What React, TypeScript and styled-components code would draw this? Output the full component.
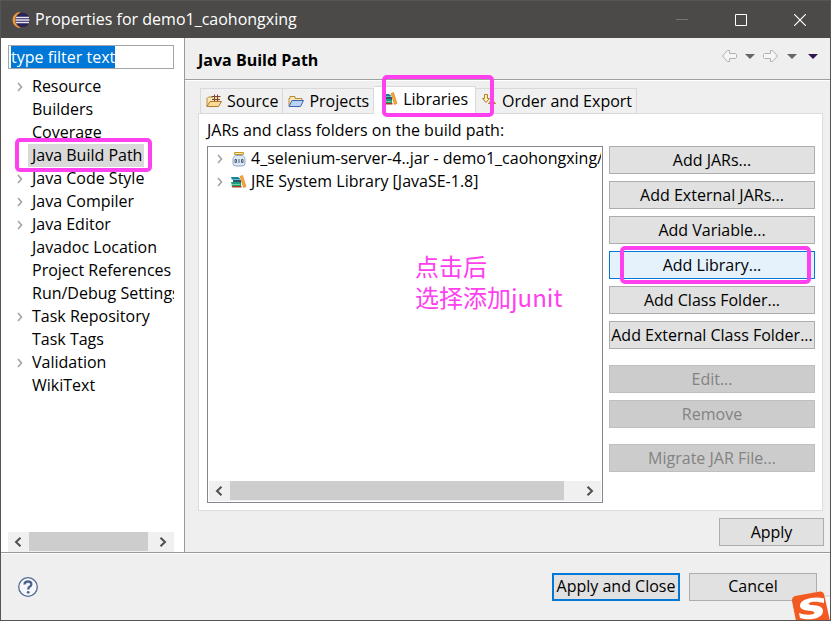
import React, { useEffect, useRef } from "react";
import styled, { createGlobalStyle, css } from "styled-components";

const GlobalStyle = createGlobalStyle`
  *, *::before, *::after { box-sizing: border-box; }
  body { margin: 0; }
  body, button, input {
    font-family: "Open Sans", "Noto Sans", "Noto Sans CJK SC", sans-serif;
    font-size: 16px;
    line-height: 23px;
    color: #000;
  }
  svg { display: block; flex: none; }
`;

const Dialog = styled.div`
  position: relative;
  display: flex;
  flex-direction: column;
  min-height: 100vh;
  border: 1px solid #555;
  background: #efefef;
  overflow: hidden;
`;

const TitleBar = styled.header`
  display: flex;
  align-items: center;
  height: 37px;
  padding: 0 1px 0 11px;
  background: #4b4a48;
  color: #fff;
`;

const WindowTitle = styled.h1`
  flex: 1;
  margin: 0 0 0 4px;
  font-size: 16px;
  font-weight: 400;
`;

const CaptionButton = styled.button`
  display: flex;
  align-items: center;
  justify-content: center;
  width: 59px;
  height: 37px;
  padding: 0;
  border: 0;
  background: none;
`;

const Body = styled.div`
  flex: 1;
  display: flex;
  min-height: 0;
`;

const Sidebar = styled.nav`
  display: flex;
  flex-direction: column;
  flex: none;
  width: 184px;
  padding: 7px 10px 0 7px;
  background: #fff;
  border-right: 1px solid #999;
`;

const FilterInput = styled.input`
  width: 100%;
  height: 24px;
  padding: 0 2px;
  border: 1px solid #a3a5ab;
  border-radius: 0;
  outline: 0;
  background: #fff;
  line-height: 20px;
  &::selection { background: #0078d7; color: #fff; }
`;

const Tree = styled.ul`
  flex: 1;
  margin: 0;
  padding: 6px 0 0;
  list-style: none;
  overflow: hidden;
`;

const TreeItem = styled.li`
  display: flex;
  align-items: center;
  height: 23px;
  white-space: nowrap;
`;

const TreeToggle = styled.span<{ $wide?: boolean }>`
  display: flex;
  flex: none;
  align-items: center;
  justify-content: center;
  width: ${(p) => (p.$wide ? 22 : 20)}px;
  padding-left: ${(p) => (p.$wide ? 0 : 4)}px;
`;

const EntryIcon = styled.span`
  display: flex;
  flex: none;
  justify-content: center;
  width: 16px;
`;

const TreeLabel = styled.span<{ $selected?: boolean }>`
  position: relative;
  padding: 0 2px 0 4px;
  background: ${(p) => (p.$selected ? "#d9d9d9" : "transparent")};
`;

const Marker = styled.span<{ $inset: string }>`
  position: absolute;
  z-index: 2;
  inset: ${(p) => p.$inset};
  border: 4px solid #ff40ee;
  border-radius: 5px;
  pointer-events: none;
`;

const ScrollTrack = styled.div`
  display: flex;
  flex: none;
  height: 20px;
  background: #f0f0f0;
`;

const ScrollArrow = styled.button`
  display: flex;
  flex: none;
  align-items: center;
  justify-content: center;
  width: 21px;
  height: 20px;
  padding: 0 2px 0 0;
  border: 0;
  background: none;
`;

const ScrollThumb = styled.div<{ $rest: number }>`
  flex: 1;
  height: 19px;
  margin-right: ${(p) => p.$rest}px;
  background: #cdcdcd;
`;

const Page = styled.main`
  flex: 1;
  display: flex;
  flex-direction: column;
  min-width: 0;
`;

const PageHeader = styled.div`
  display: flex;
  align-items: center;
  justify-content: space-between;
  height: 42px;
  padding: 0 12px 5px 13px;
  border-bottom: 1px solid #a0a0a0;
  box-shadow: 0 1px 0 #fff;
`;

const PageTitle = styled.h2`
  margin: 0;
  padding-top: 9px;
  font-size: 16px;
  font-weight: 700;
`;

const HistoryBar = styled.div`
  display: flex;
  align-items: center;
  gap: 8px;
`;

const IconButton = styled.button`
  padding: 0;
  border: 0;
  background: none;
`;

const MenuButton = styled(IconButton)`
  margin-left: 3px;
`;

const TabList = styled.div`
  display: flex;
  align-items: flex-end;
  margin: 6px 0 -1px;
  padding-left: 15px;
`;

const Tab = styled.button<{ $active?: boolean }>`
  position: relative;
  display: flex;
  align-items: center;
  gap: 5px;
  height: 26px;
  padding: 0 4px 0 5px;
  border: 1px solid #d9d9d9;
  border-left-width: 0;
  background: #f0f0f0;
  white-space: nowrap;
  &:first-child { border-left-width: 1px; }
  ${(p) =>
    p.$active &&
    css`
      height: 28px;
      padding: 0 7px 2px 8px;
      background: #fff;
      border-bottom-color: #fff;
    `}
`;

const TabPanel = styled.section`
  flex: 1;
  display: flex;
  flex-direction: column;
  margin: 0 7px 0 13px;
  padding: 5px 7px 7px 8px;
  border: 1px solid #dcdcdc;
  background: #fff;
`;

const PanelCaption = styled.p`
  margin: 0 0 4px;
`;

const Columns = styled.div`
  flex: 1;
  display: flex;
  gap: 6px;
`;

const EntryBox = styled.div`
  position: relative;
  flex: 1;
  display: flex;
  flex-direction: column;
  min-width: 0;
  padding: 0 1px 1px;
  border: 1px solid #828790;
`;

const EntryList = styled(Tree)`
  padding-top: 0;
`;

const Note = styled.p`
  position: absolute;
  left: 207px;
  top: 103px;
  margin: 0;
  color: #ff40ee;
  font-family: "Noto Sans CJK SC", sans-serif;
  font-size: 24px;
  font-weight: 400;
  line-height: 31px;
  white-space: nowrap;
`;

const Actions = styled.div`
  display: flex;
  flex: none;
  flex-direction: column;
  gap: 7px;
  width: 206px;
`;

const PushButton = styled.button<{ $width?: number; $look?: "hover" | "default"; $spaced?: boolean }>`
  position: relative;
  width: ${(p) => (p.$width ? `${p.$width}px` : "100%")};
  height: 28px;
  margin-top: ${(p) => (p.$spaced ? 9 : 0)}px;
  padding: 0;
  border: 1px solid #adadad;
  background: #e1e1e1;
  white-space: nowrap;
  ${(p) => p.$look === "hover" && css`border-color: #0078d7; background: #e5f1fb;`}
  ${(p) => p.$look === "default" && css`border: 2px solid #0078d7;`}
  &:disabled { border-color: #bfbfbf; background: #ccc; color: #838383; }
`;

const ApplyRow = styled.div`
  display: flex;
  justify-content: flex-end;
  padding: 7px 6px 6px;
`;

const Footer = styled.footer`
  display: flex;
  align-items: center;
  gap: 9px;
  height: 68px;
  padding: 0 13px 0 17px;
  border-top: 1px solid #999;
  box-shadow: inset 0 1px 0 #fff;
`;

const FooterSpacer = styled.div`
  flex: 1;
`;

const InputMethodBadge = styled.div`
  position: absolute;
  right: -1px;
  bottom: -1px;
  z-index: 3;
`;

const EclipseIcon = () => (
  <svg width="19" height="18" viewBox="0 0 19 18">
    <path d="M8.500 1A8 8 0 0 0 8.500 17A11 11 0 0 1 8.500 1Z" fill="#f09a38" />
    <circle cx="10.500" cy="9" r="7.300" fill="#2c2255" />
    <path d="M4 6.500h13M3.500 9h14M4 11.500h13" stroke="#e6e4f2" strokeWidth="1.400" />
  </svg>
);

const Expander = () => (
  <svg width="6" height="10" viewBox="0 0 6 10">
    <path d="M1 1l3.500 4L1 9" fill="none" stroke="#a6a6a6" strokeWidth="1.700" />
  </svg>
);

const SourceIcon = () => (
  <svg width="16" height="14" viewBox="0 0 16 14">
    <path d="M1 12.500V4.500L2.500 3H6l1 1.500h5v3" fill="#fbe6ae" stroke="#b78a45" />
    <path d="M6.500 2.500h7v5h-7z" fill="#f7d9b0" />
    <path d="M5.500 2.500h9M6 5.500h8M8.500 0.500v7M11.500 0.500v7" stroke="#7b4a35" />
    <path d="M1 12.500L4 7.500h11.500l-3 5z" fill="#fbdc94" stroke="#b07a30" />
  </svg>
);

const ProjectsIcon = () => (
  <svg width="16" height="14" viewBox="0 0 16 14">
    <path d="M1 12V4.500h1v-2h5v2h7v3" fill="#fbe8b3" stroke="#b68a3d" />
    <path d="M1 12.500L4 6.500h11.500l-3 6z" fill="#b8d5f5" stroke="#3c63b4" />
  </svg>
);

const LibraryIcon = () => (
  <svg width="16" height="14" viewBox="0 0 16 14">
    <path d="M0 2h7l2 1.500V5H1z" fill="#1b7fa0" />
    <path d="M1 4.500h8" stroke="#5fc3c4" />
    <path d="M2 5h8v3H2z" fill="#2b5570" />
    <path d="M0 7h8l2 1v3H1z" fill="#1f9e7a" />
    <path d="M1 9.500h8" stroke="#6fd09a" />
    <path d="M0.500 11h10v1.500h-9z" fill="#a33c22" />
    <path d="M9 1.500L11.500.5 15 11.500l-2.500 1z" fill="#f7a833" stroke="#d07a1c" strokeWidth=".6" />
  </svg>
);

const OrderIcon = () => (
  <svg width="16" height="16" viewBox="0 0 16 16">
    <path d="M3.500 1.500h3v4h2L5 9.500 1.500 5.500h2z" fill="#fff1be" stroke="#b08021" />
    <path d="M9.500 14.500h3v-4h2L11 6.500 7.500 10.500h2z" fill="#f8cf69" stroke="#b08021" />
  </svg>
);

const JarIcon = () => (
  <svg width="14" height="16" viewBox="0 0 14 16">
    <path d="M3.500 4.500h7c3 2 2.500 3.500 2.500 8q0 2.500-3 2.500H4q-3 0-3-2.500C1 8 .5 6.500 3.500 4.500z" fill="#dce8f6" stroke="#8ba5c6" />
    <path d="M2.500 1.500h9v2h-9z" fill="#fbe39b" stroke="#c59a31" />
    <path d="M3 8.500h1.500v3H3zM7 8v4M9.500 8.500H11v3H9.500z" fill="none" stroke="#4e6079" />
  </svg>
);

const HistoryArrow = ({ forward }: { forward?: boolean }) => (
  <svg width="16" height="14" viewBox="0 0 16 14">
    <path
      d={forward ? "M1.500 4.500h6v-3h2L14.500 7l-5 5.500h-2v-3h-6l-1-1v-3z" : "M14.500 4.500h-6v-3h-2L1.500 7l5 5.500h2v-3h6l1-1v-3z"}
      fill="#f6f6f6"
      stroke="#b0b0b0"
    />
  </svg>
);

const DropArrow = ({ color = "#666" }: { color?: string }) => (
  <svg width="10" height="5" viewBox="0 0 10 5">
    <path d="M0 0h10L5 5z" fill={color} />
  </svg>
);

const ScrollChevron = ({ right }: { right?: boolean }) => (
  <svg width="8" height="10" viewBox="0 0 8 10">
    <path d={right ? "M1.500 0.700L6 5l-4.500 4.300" : "M6.500 0.700L2 5l4.500 4.300"} fill="none" stroke="#505050" strokeWidth="2" />
  </svg>
);

const HelpIcon = () => (
  <svg width="20" height="20" viewBox="0 0 20 20">
    <circle cx="10" cy="10" r="9.300" fill="#f5f7fa" stroke="#536a91" strokeWidth="1.300" />
    <path d="M6.500 7.500Q6.700 4.500 10 4.500T13.400 7.300Q13.400 8.800 11.600 9.800 10.200 10.700 10.200 12.500" fill="none" stroke="#4d648d" strokeWidth="2.300" />
    <circle cx="10.200" cy="15.300" r="1.400" fill="#4d648d" />
  </svg>
);

const SogouIcon = () => (
  <svg width="39" height="30" viewBox="0 0 39 30">
    <path d="M28 5h11v25H28z" fill="#fafafa" />
    <path d="M28 5h11" stroke="#c9ced2" />
    <path d="M3 5L28 .5q3-.5 4 2.500l6 27H4L0 10q-.5-4 3-5z" fill="#f35a21" />
    <path d="M32 7.500C22 5 9 8 8 14c-.6 5 6 5.500 11 6 5 .5 4 3 0 3.500-4 .6-8 0-12-1.500l1 5c9 3 23 1 23-7 0-5-6-5.500-11-6-5-.3-4-2.500 0-3 4-.6 8 .2 12 1.200z" fill="#fff" />
  </svg>
);

const categories = [
  { label: "Resource", expandable: true },
  { label: "Builders" },
  { label: "Coverage" },
  { label: "Java Build Path", selected: true },
  { label: "Java Code Style", expandable: true },
  { label: "Java Compiler", expandable: true },
  { label: "Java Editor", expandable: true },
  { label: "Javadoc Location" },
  { label: "Project References" },
  { label: "Run/Debug Settings" },
  { label: "Task Repository", expandable: true },
  { label: "Task Tags" },
  { label: "Validation", expandable: true },
  { label: "WikiText" },
];

const tabs = [
  { label: "Source", icon: <SourceIcon /> },
  { label: "Projects", icon: <ProjectsIcon /> },
  { label: "Libraries", icon: <LibraryIcon />, active: true },
  { label: "Order and Export", icon: <OrderIcon /> },
];

const actions: { label: string; disabled?: boolean; spaced?: boolean; marked?: boolean }[] = [
  { label: "Add JARs..." },
  { label: "Add External JARs..." },
  { label: "Add Variable..." },
  { label: "Add Library...", marked: true },
  { label: "Add Class Folder..." },
  { label: "Add External Class Folder..." },
  { label: "Edit...", disabled: true, spaced: true },
  { label: "Remove", disabled: true },
  { label: "Migrate JAR File...", disabled: true, spaced: true },
];

const HorizontalScroll = ({ rest }: { rest: number }) => (
  <ScrollTrack>
    <ScrollArrow aria-label="Scroll left"><ScrollChevron /></ScrollArrow>
    <ScrollThumb $rest={rest} />
    <ScrollArrow aria-label="Scroll right"><ScrollChevron right /></ScrollArrow>
  </ScrollTrack>
);

export default function App() {
  const filter = useRef<HTMLInputElement>(null);
  useEffect(() => {
    filter.current?.focus();
    filter.current?.select();
  }, []);

  return (
    <>
      <GlobalStyle />
      <Dialog role="dialog" aria-labelledby="dialog-title">
        <TitleBar>
          <EclipseIcon />
          <WindowTitle id="dialog-title">Properties for demo1_caohongxing</WindowTitle>
          <CaptionButton aria-label="Minimize" disabled>
            <svg width="12" height="12"><path d="M0 5.500h12" stroke="#777673" /></svg>
          </CaptionButton>
          <CaptionButton aria-label="Maximize">
            <svg width="12" height="12"><path d="M.5.5h11v11H.5z" fill="none" stroke="#fff" /></svg>
          </CaptionButton>
          <CaptionButton aria-label="Close">
            <svg width="12" height="12"><path d="M0 0l12 12M12 0L0 12" stroke="#fff" strokeWidth="1.200" /></svg>
          </CaptionButton>
        </TitleBar>

        <Body>
          <Sidebar>
            <FilterInput ref={filter} aria-label="Filter" defaultValue="type filter text" />
            <Tree>
              {categories.map((item) => (
                <TreeItem key={item.label}>
                  <TreeToggle>{item.expandable && <Expander />}</TreeToggle>
                  <TreeLabel $selected={item.selected}>
                    {item.label}
                    {item.selected && <Marker $inset="-6px -8px -5px -13px" />}
                  </TreeLabel>
                </TreeItem>
              ))}
            </Tree>
            <HorizontalScroll rest={5} />
          </Sidebar>

          <Page>
            <PageHeader>
              <PageTitle>Java Build Path</PageTitle>
              <HistoryBar>
                <IconButton aria-label="Back"><HistoryArrow /></IconButton>
                <IconButton aria-label="Back history"><DropArrow /></IconButton>
                <IconButton aria-label="Forward"><HistoryArrow forward /></IconButton>
                <IconButton aria-label="Forward history"><DropArrow /></IconButton>
                <MenuButton aria-label="Menu"><DropArrow color="#2e1650" /></MenuButton>
              </HistoryBar>
            </PageHeader>

            <TabList role="tablist">
              {tabs.map((tab) => (
                <Tab key={tab.label} role="tab" aria-selected={!!tab.active} $active={tab.active}>
                  {tab.icon}
                  {tab.label}
                  {tab.active && <Marker $inset="-12px -19px -4px 8px" />}
                </Tab>
              ))}
            </TabList>

            <TabPanel role="tabpanel">
              <PanelCaption>JARs and class folders on the build path:</PanelCaption>
              <Columns>
                <EntryBox>
                  <EntryList>
                    <TreeItem>
                      <TreeToggle $wide><Expander /></TreeToggle>
                      <EntryIcon><JarIcon /></EntryIcon>
                      <TreeLabel>4_selenium-server-4..jar - demo1_caohongxing/lib</TreeLabel>
                    </TreeItem>
                    <TreeItem>
                      <TreeToggle $wide><Expander /></TreeToggle>
                      <EntryIcon><LibraryIcon /></EntryIcon>
                      <TreeLabel>JRE System Library [JavaSE-1.8]</TreeLabel>
                    </TreeItem>
                  </EntryList>
                  <HorizontalScroll rest={16} />
                  <Note>点击后<br />选择添加junit</Note>
                </EntryBox>
                <Actions>
                  {actions.map((action) => (
                    <PushButton
                      key={action.label}
                      disabled={action.disabled}
                      $spaced={action.spaced}
                      $look={action.marked ? "hover" : undefined}
                    >
                      {action.label}
                      {action.marked && <Marker $inset="-6px 3px -6px 10px" />}
                    </PushButton>
                  ))}
                </Actions>
              </Columns>
            </TabPanel>

            <ApplyRow>
              <PushButton $width={105}>Apply</PushButton>
            </ApplyRow>
          </Page>
        </Body>

        <Footer>
          <IconButton aria-label="Help"><HelpIcon /></IconButton>
          <FooterSpacer />
          <PushButton $width={128} $look="default">Apply and Close</PushButton>
          <PushButton $width={128}>Cancel</PushButton>
        </Footer>
        <InputMethodBadge><SogouIcon /></InputMethodBadge>
      </Dialog>
    </>
  );
}
